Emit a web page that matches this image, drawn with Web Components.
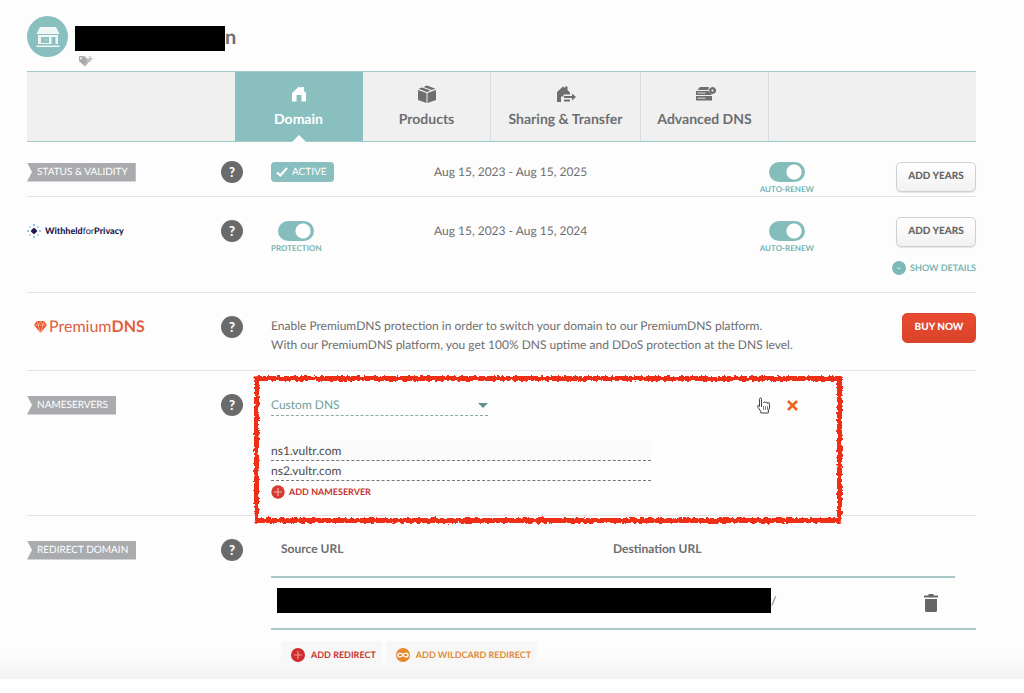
<!DOCTYPE html>
<html lang="en">
<head>
<meta charset="utf-8">
<title>Domain details</title>
<style>
  body { margin: 0; background: #fff; font-family: Lato, "Open Sans", sans-serif; font-size: 12px; color: #6d6e70; text-rendering: geometricPrecision; }
</style>
</head>
<body>
<domain-page></domain-page>

<script>
const define = (name, html, setup) => {
  const template = document.createElement('template');
  template.innerHTML = html;
  customElements.define(name, class extends HTMLElement {
    constructor() {
      super();
      this.attachShadow({ mode: 'open' }).append(template.content.cloneNode(true));
    }
    connectedCallback() { if (setup) setup(this, this.shadowRoot); }
  });
};

define('site-header', `
<style>
  :host { display: flex; gap: 7px; padding: 16px 0 0; height: 55px; }
  .badge { width: 41px; height: 41px; border-radius: 50%; background: #8abfbf; flex: none; display: grid; place-items: center; }
  .badge svg { width: 24px; height: 22px; }
  h1 { margin: 10px 0 0; font-size: 20px; line-height: 22px; height: 25px; display: flex; color: #6d6e70; }
  .mask { width: 150px; height: 25px; background: #000; }
  button { display: block; margin: 4px 0 0 4px; padding: 0; border: 0; background: none; width: 14px; height: 12px; }
  button svg { display: block; width: 14px; height: 12px; }
</style>
<div class="badge">
  <svg viewBox="0 0 24 22" fill="#f1f7f6" aria-hidden="true"><path d="M4 1h16l3.500 7H.5z"/><path fill-rule="evenodd" d="M2 9h20v9H2zM5 11v6h8v-6zM15.500 11v7h4v-7z"/><path d="M7 12h5v4H7z" opacity=".15"/><path d="M.5 19.500h23V21H.5z"/></svg>
</div>
<div>
  <h1><span class="mask"></span>n</h1>
  <button aria-label="Add tag"><svg viewBox="0 0 14 12" fill="#a9a9a9"><path fill-rule="evenodd" d="M0 1h4.500l4.500 5-4 4.500L0 6zM2 2.200a1 1 0 1 0 .1 0z"/><path d="M6 1l4.500 5L6 11.500l-1-.8L9.200 6 5 1z"/><path d="M10.500 1h1v2.500H14v1h-2.500V7h-1V4.500H8.800v-1h1.700z"/></svg></button>
</div>`);

define('tab-bar', `
<style>
  :host { display: flex; box-sizing: border-box; height: 71px; padding-left: 208px; background: #f0f0f0; border: solid #9fcaca; border-width: 1px 0; }
</style>
<slot></slot>`, host => host.setAttribute('role', 'navigation'));

define('tab-item', `
<style>
  :host { display: block; width: 128px; box-sizing: border-box; border-right: 1px solid #d4dcdc; }
  :host([wide]) { width: 150px; }
  :host([active]) { background: #8abfbf; border-color: #8abfbf; color: #fff; }
  a { position: relative; display: flex; flex-direction: column; align-items: center; gap: 5px; height: 100%; box-sizing: border-box; padding-top: 11px; color: inherit; text-decoration: none; font-weight: 700; font-size: 14px; line-height: 18px; }
  .icon { width: 22px; height: 22px; }
  ::slotted(svg) { display: block; width: 22px; height: 22px; fill: currentColor; }
  :host([active]) a::after { content: ""; position: absolute; bottom: -1px; left: calc(50% - 7px); border: 7px solid transparent; border-top: 0; border-bottom-color: #fff; }
</style>
<a href="#"><span class="icon"><slot name="icon"></slot></span><span><slot></slot></span></a>`);

define('detail-row', `
<style>
  :host { display: grid; grid-template-columns: 194px 50px minmax(0, 1fr) auto; border-bottom: 1px solid #e3e3e3; }
  :host([last]) { border-bottom: 0; }
  .lead, .help { padding-top: var(--row-pad, 23px); height: 22px; display: flex; align-items: center; }
  .main { padding-top: var(--row-pad, 23px); padding-bottom: var(--row-end, 0px); min-width: 0; }
  .action { padding-top: var(--action-pad, 20px); }
  :host([compact]) { --row-pad: 19px; --action-pad: 20px; --row-end: 2px; }
  .help button { width: 22px; height: 22px; padding: 0; border: 0; border-radius: 50%; background: #6a6a6a; color: #fff; font: 900 13px/22px Lato, sans-serif; }
</style>
<div class="lead"><slot name="lead"></slot></div>
<div class="help"><button aria-label="Help">?</button></div>
<div class="main"><slot></slot></div>
<div class="action"><slot name="action"></slot></div>`);

define('ribbon-label', `
<style>
  :host { display: block; background: #a9abae; color: #fff; font-size: 10px; line-height: 19px; padding: 0 8px 0 10px; clip-path: polygon(0 0, 100% 0, 100% 100%, 0 100%, 5px 50%); text-transform: uppercase; }
</style>
<slot></slot>`);

define('privacy-logo', `
<style>
  :host { display: flex; align-items: center; gap: 4px; color: #1e1a4f; font-size: 9px; line-height: 14px; }
  svg { width: 14px; height: 14px; }
  b { font-weight: 900; }
</style>
<svg viewBox="0 0 14 14" aria-hidden="true"><rect x="4.500" y="4.500" width="5" height="5" rx="1" fill="#1e1a4f" transform="rotate(45 7 7)"/><g fill="#54aee0"><circle cx="7" cy="1" r=".9"/><circle cx="7" cy="13" r=".9"/><circle cx="1" cy="7" r=".9"/><circle cx="13" cy="7" r=".9"/><circle cx="3" cy="3" r=".8"/><circle cx="11" cy="3" r=".8"/><circle cx="3" cy="11" r=".8"/><circle cx="11" cy="11" r=".8"/></g></svg>
<span><b>Withheld</b>for<b>Privacy</b></span>`);

define('premium-logo', `
<style>
  :host { display: flex; align-items: center; gap: 2px; padding-left: 7px; color: #e0603f; font-size: 16px; line-height: 22px; }
  svg { width: 13px; height: 12px; }
</style>
<svg viewBox="0 0 13 12" aria-hidden="true"><path fill="#e8542c" d="M3 0h7l3 4-6.500 8L0 4z"/><path d="M.5 4h12M3.200 0L4 4l2.500 8L9 4l.8-4M4 4l2.500-3.500L9 4" fill="none" stroke="#f9c3ae" stroke-width=".7"/></svg>
<span>Premium<b>DNS</b></span>`);

define('status-badge', `
<style>
  :host { display: inline-flex; align-items: center; gap: 4px; height: 20px; padding: 0 7px 0 5px; border-radius: 4px; background: #8abfbf; color: #fff; font-size: 10px; margin-top: 1px; }
  svg { width: 12px; height: 10px; }
</style>
<svg viewBox="0 0 12 10" aria-hidden="true"><path d="M1 5.500l3.300 3L11 1" fill="none" stroke="#fff" stroke-width="2"/></svg><slot></slot>`);

define('toggle-switch', `
<style>
  :host { display: block; }
  label { display: inline-flex; flex-direction: column; align-items: center; color: #79b3b1; font-size: 8px; line-height: 10px; font-weight: 700; gap: 2px; white-space: nowrap; }
  input { appearance: none; margin: 1px 0 0; width: 36px; height: 20px; border-radius: 10px; background: radial-gradient(circle at 25px 10px, #fff 7px, #84bdbc 8px); }
</style>
<label><input type="checkbox" role="switch" checked><span><slot></slot></span></label>`);

define('push-button', `
<style>
  :host { display: block; }
  button { display: block; box-sizing: border-box; min-width: 80px; height: 30px; padding: 0 0 2px; border: 1px solid #cfcfcf; border-radius: 5px; background: linear-gradient(#fff, #f1f1f1); color: #666; font: 900 10px/16px Lato, sans-serif; text-rendering: inherit; box-shadow: 0 1px 1px #e4e4e4; }
  :host([primary]) button { min-width: 74px; border-color: #dc452b; background: linear-gradient(#e94b30, #d9432b); color: #fff; box-shadow: none; padding-bottom: 3px; }
</style>
<button><slot></slot></button>`);

define('link-button', `
<style>
  :host { display: block; }
  button { display: flex; align-items: center; gap: var(--link-gap, 4px); border: 0; border-radius: 3px; padding: 0; background: none; color: var(--link-color, #c5352e); font: 700 9px/14px Lato, sans-serif; text-rendering: inherit; white-space: nowrap; }
  :host([boxed]) { --link-gap: 6px; }
  :host([boxed]) button { height: 27px; padding: 0 6px 0 10px; background: #f7f7f7; }
  ::slotted(svg) { width: 14px; height: 14px; flex: none; }
</style>
<button><slot name="icon"></slot><span><slot></slot></span></button>`);

define('period-line', `
<style>
  :host { display: grid; grid-template-columns: 163px minmax(0, 1fr) auto; align-items: start; }
  .date { font-size: 12px; line-height: 22px; }
</style>
<div><slot name="state"></slot></div>
<div class="date"><slot></slot></div>
<toggle-switch>AUTO-RENEW</toggle-switch>`);

define('row-action', `
<style>
  :host { display: flex; flex-direction: column; align-items: flex-end; gap: 14px; width: 162px; }
</style>
<slot></slot>`);

define('marker-frame', `
<style>
  :host { display: block; position: absolute; inset: -18px 134px -8px -17px; pointer-events: none; }
  .line { position: absolute; inset: 0; border: 5px solid #ee2d18; border-radius: 3px; filter: url(#rough); }
  svg { position: absolute; width: 0; height: 0; }
</style>
<svg aria-hidden="true"><filter id="rough" x="-5%" y="-10%" width="110%" height="120%"><feTurbulence type="fractalNoise" baseFrequency=".3" numOctaves="2" seed="4"/><feDisplacementMap in="SourceGraphic" scale="5" xChannelSelector="R" yChannelSelector="G"/></filter></svg>
<div class="line"></div>`);

define('nameserver-editor', `
<style>
  :host { display: block; position: relative; height: 121px; }
  .top { display: flex; justify-content: space-between; align-items: center; height: 22px; padding-right: 178px; }
  select { appearance: none; display: block; box-sizing: border-box; width: 217px; height: 22px; border: 0; border-bottom: 1px dashed #86aaa8; border-radius: 0; padding: 0 16px 0 0; color: #72a09d; font: 12px/18px Lato, sans-serif; text-rendering: inherit; background: none; }
  .pick { position: relative; }
  .pick::after { content: ""; position: absolute; right: 0; top: 9px; border: 5px solid transparent; border-top-color: #5f9290; border-bottom: 0; pointer-events: none; }
  .tools { display: flex; align-items: center; gap: 16px; }
  .tools button { border: 0; padding: 0; background: none; }
  .tools svg { display: block; }
  .fields { width: 380px; margin: 25px 0 4px; }
  input { display: block; box-sizing: border-box; width: 100%; height: 20px; border: 0; border-bottom: 1px dashed #777; border-radius: 0; padding: 0; background: none; color: #4c4c4c; font: 12px/18px Lato, sans-serif; text-rendering: inherit; }
  input:first-child { background: #fafafa; }
</style>
<div class="top">
  <div class="pick"><select aria-label="DNS type"><option>Custom DNS</option></select></div>
  <div class="tools">
    <button aria-label="Save"><svg width="14" height="17" viewBox="0 0 14 17"><path d="M4.500 10V2.300C4.500.4 2.500.5 2.500 2.300v7.200L1.700 8.700C.6 8 .2 9 .8 10l3 4.300V16h7.500v-2l1.200-3V6.500c0-1.300-1.700-1.300-1.800 0 0-1.500-2-1.700-2.200-.5 0-1.300-2-1.300-2.200 0" fill="#fff" stroke="#444" stroke-width="1"/><path d="M6.500 9v4M8.500 9v4M10.500 9v4" stroke="#777" stroke-width=".9"/></svg></button>
    <button aria-label="Cancel"><svg width="11" height="11" viewBox="0 0 11 11"><path d="M1 1l9 9M10 1L1 10" stroke="#ec6523" stroke-width="2.700"/></svg></button>
  </div>
</div>
<div class="fields">
  <input aria-label="Nameserver 1" value="ns1.vultr.com">
  <input aria-label="Nameserver 2" value="ns2.vultr.com">
</div>
<link-button><svg slot="icon" viewBox="0 0 14 14"><circle cx="7" cy="7" r="6.700" fill="#d63a30"/><path d="M7 3v8M3 7h8" stroke="#f3b5a8" stroke-width="1.100"/></svg>ADD NAMESERVER</link-button>
<marker-frame></marker-frame>`);

define('redirect-table', `
<style>
  :host { display: block; }
  table { width: 100%; border-collapse: collapse; table-layout: fixed; }
  th { height: 37px; padding: 0 0 0 10px; vertical-align: top; text-align: left; font-size: 12px; line-height: 20px; font-weight: 700; border-bottom: 2px solid #a6c9c6; }
  th.end { border: 0; padding: 0; }
  td { height: 50px; padding: 0; border-bottom: 2px solid #a6c9c6; }
  .url { display: flex; padding-left: 6px; align-items: center; margin-bottom: 6px; }
  .mask { width: 494px; height: 25px; background: #000; }
  td button { display: block; border: 0; padding: 0; background: none; margin: 0 0 0 35px; }
  td svg { display: block; }
  .buttons { display: flex; gap: 4px; padding: 11px 0 11px 10px; }
</style>
<table>
  <colgroup><col style="width:332px"><col><col style="width:66px"><col style="width:21px"></colgroup>
  <thead><tr><th>Source URL</th><th>Destination URL</th><th aria-label="Actions"></th><th class="end" aria-hidden="true"></th></tr></thead>
  <tbody><tr><td colspan="2"><div class="url"><span class="mask"></span>/</div></td><td colspan="2"><button aria-label="Delete redirect"><svg width="14" height="18" viewBox="0 0 14 18" fill="#666"><path d="M4.500 0h5v1.500H14v2H0v-2h4.500zM1 5h12v11.500q0 1.500-1.500 1.500h-9Q1 18 1 16.500z"/></svg></button></td></tr></tbody>
</table>
<div class="buttons">
  <link-button boxed><svg slot="icon" viewBox="0 0 14 14"><circle cx="7" cy="7" r="7" fill="#cf2d2f"/><path d="M7 3v8M3 7h8" stroke="#f0958c" stroke-width="1.200"/></svg>ADD REDIRECT</link-button>
  <link-button boxed style="--link-color:#e08a35"><svg slot="icon" viewBox="0 0 14 14"><circle cx="7" cy="7" r="7" fill="#e5872a"/><path d="M7 7C5.500 4.500 2 4.500 2 7s3.500 2.500 5 0 5-2.500 5 0-3.500 2.500-5 0z" fill="none" stroke="#fff" stroke-width="1.400"/></svg>ADD WILDCARD REDIRECT</link-button>
</div>`);

define('domain-page', `
<style>
  :host { display: block; }
  main { padding: 0 48px 0 27px; background: linear-gradient(to top, #f2f2f2, #fdfdfd 26px); }
  p { margin: 0; font-size: 12px; line-height: 19px; }
</style>
<main>
  <site-header></site-header>
  <tab-bar>
    <tab-item active><svg slot="icon" viewBox="0 0 22 22"><path d="M4 10l7-6.500 2 1.800V4h3v4l2 2v8.500h-4.500V12h-5v6.500H4z"/></svg>Domain</tab-item>
    <tab-item><svg slot="icon" viewBox="0 0 22 22"><path d="M2 7l8.500 3v10L2 17zM20 7l-8.500 3v10l8.500-3zM2.500 5.800L6 4.600l8.500 3L11 9zM7.500 4L11 2.500l8.500 3.300-3.500 1.300z"/></svg>Products</tab-item>
    <tab-item wide><svg slot="icon" viewBox="0 0 22 22"><path d="M2 9l6-5.500L10 5V3.500h2.500V7L15 9.500v2H8.500v2H6V19H2zM9 13h8v-2.500l4 3.500-4 3.500V15H9zM9 16.500h6v2H9z"/></svg>Sharing &amp; Transfer</tab-item>
    <tab-item><svg slot="icon" viewBox="0 0 22 22"><path d="M6 4h9a5 5 0 0 0-.5 3H3.500zM2 8h12.500a4 4 0 0 0 3 2.500V12H2zM2 13h16v4.500H2z"/><path fill-rule="evenodd" d="M18.500 4a3.500 3.500 0 1 0 .1 0zm0 2.500a1 1 0 1 1-.1 0z"/><path d="M3.500 10h8M3.500 15.200h8" stroke="#ddd" stroke-width="1"/></svg>Advanced DNS</tab-item>
  </tab-bar>

  <detail-row compact>
    <ribbon-label slot="lead">Status &amp; Validity</ribbon-label>
    <period-line><status-badge slot="state">ACTIVE</status-badge>Aug 15, 2023 - Aug 15, 2025</period-line>
    <row-action slot="action"><push-button>ADD YEARS</push-button></row-action>
  </detail-row>

  <detail-row style="--row-end:18px">
    <privacy-logo slot="lead"></privacy-logo>
    <period-line><toggle-switch slot="state">PROTECTION</toggle-switch>Aug 15, 2023 - Aug 15, 2024</period-line>
    <row-action slot="action" style="padding-bottom:17px"><push-button>ADD YEARS</push-button>
      <link-button style="--link-color:#7bb5b2"><svg slot="icon" viewBox="0 0 14 14"><circle cx="7" cy="7" r="7" fill="#7cbab8"/><path d="M5 6.500l2 1.500 2-1.500" fill="none" stroke="#cfe6e5"/></svg>SHOW DETAILS</link-button></row-action>
  </detail-row>

  <detail-row style="--row-end:16px">
    <premium-logo slot="lead"></premium-logo>
    <p>Enable PremiumDNS protection in order to switch your domain to our PremiumDNS platform.<br>With our PremiumDNS platform, you get 100% DNS uptime and DDoS protection at the DNS level.</p>
    <push-button primary slot="action">BUY NOW</push-button>
  </detail-row>

  <detail-row>
    <ribbon-label slot="lead">Nameservers</ribbon-label>
    <nameserver-editor></nameserver-editor>
  </detail-row>

  <detail-row last>
    <ribbon-label slot="lead">Redirect Domain</ribbon-label>
    <redirect-table></redirect-table>
  </detail-row>
</main>`);
</script>
</body>
</html>
